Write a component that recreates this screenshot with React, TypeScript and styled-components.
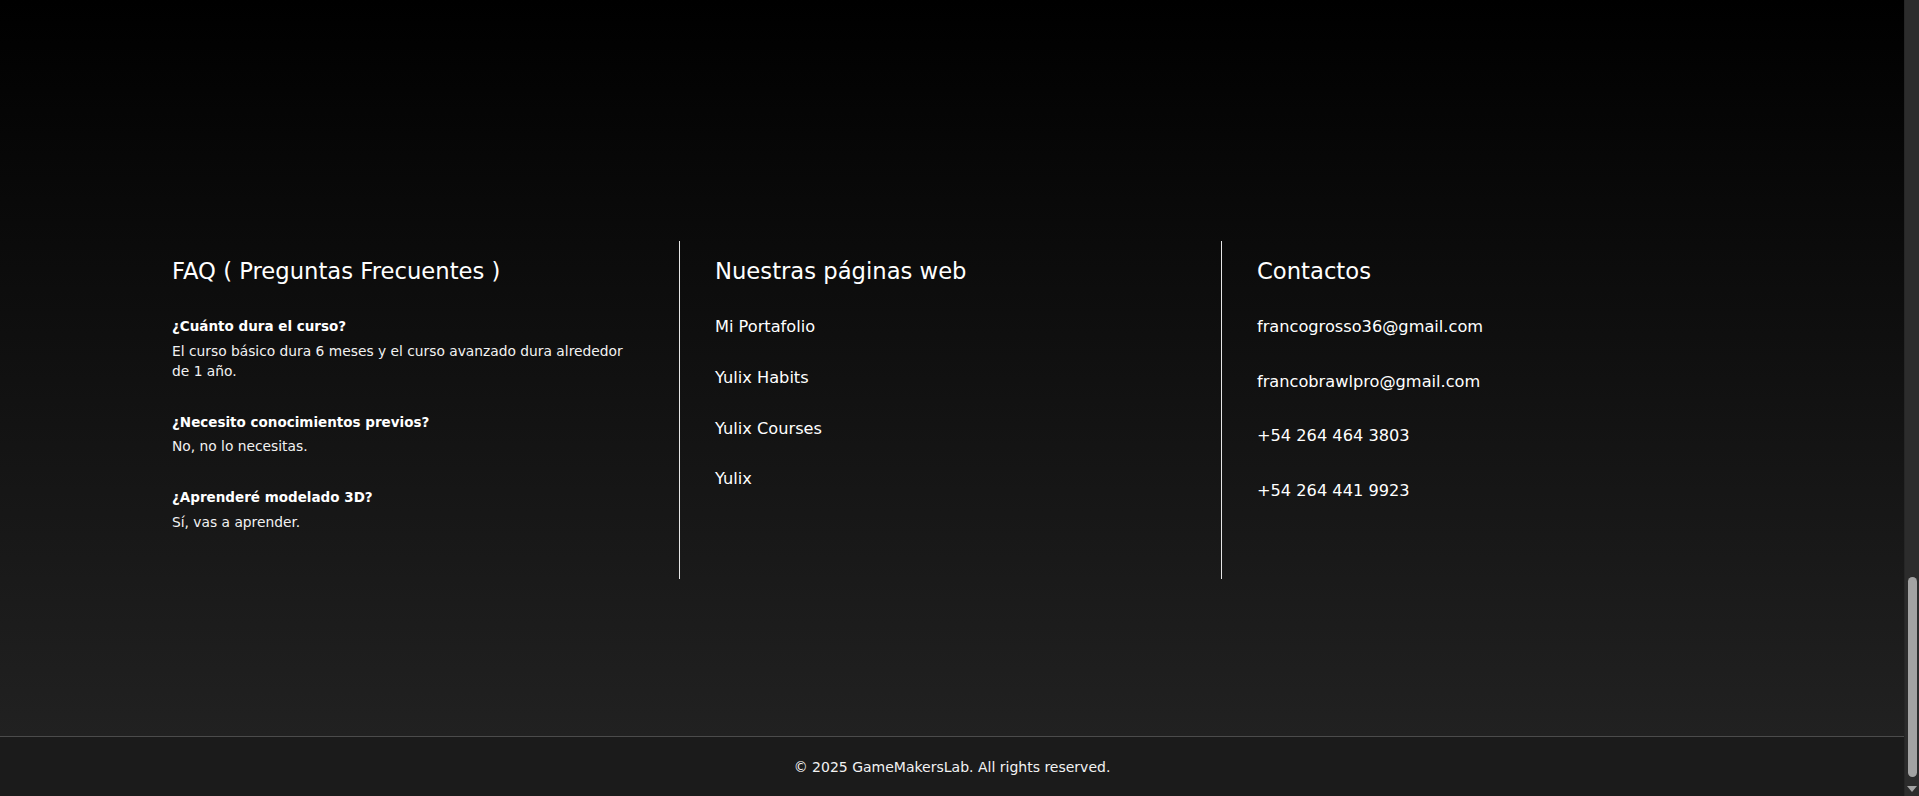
import React from "react";
import styled, { createGlobalStyle } from "styled-components";

const GlobalStyle = createGlobalStyle`
  html, body { margin: 0; padding: 0; background: #000; overflow: hidden; }
  body { font-family: "DejaVu Sans", "Liberation Sans", sans-serif; color: #fff; }
  * { box-sizing: border-box; }
`;

const Page = styled.div`
  display: flex;
  height: 100vh;
`;

const Footer = styled.footer`
  flex: 1;
  display: flex;
  flex-direction: column;
  min-width: 0;
`;

const Main = styled.div`
  height: 736px;
  background: linear-gradient(180deg, #000 0%, #212121 100%);
  padding: 241px 0 0 137px;
`;

const Columns = styled.div`
  display: grid;
  grid-template-columns: repeat(3, 542px);
`;

const Column = styled.div<{ $divided?: boolean }>`
  padding: 17px 35px 0;
  height: 338px;
  border-left: ${(p) => (p.$divided ? "1px solid #e6e6e6" : "none")};
`;

const Heading = styled.h3`
  margin: 0 0 33px;
  font-size: 22.7px;
  line-height: 26px;
  font-weight: 400;
  color: #fff;
`;

const FaqItem = styled.div`
  margin-bottom: 32px;
`;

const Question = styled.h4`
  margin: 0 0 4px;
  font-size: 13.5px;
  line-height: 19.5px;
  font-weight: 700;
  color: #fff;
`;

const Answer = styled.p`
  margin: 0;
  font-size: 13.8px;
  line-height: 20px;
  color: #f2f2f2;
`;

const LinkList = styled.ul<{ $gap: number }>`
  list-style: none;
  margin: -2px 0 0;
  padding: 0;
  display: flex;
  flex-direction: column;
  gap: ${(p) => p.$gap}px;
`;

const LinkItem = styled.li`
  font-size: 16.2px;
  line-height: 24px;
  color: #fff;
`;

const Link = styled.a`
  color: inherit;
  text-decoration: none;
`;

const BottomBar = styled.div`
  height: 60px;
  border-top: 1px solid #4b4b4b;
  background: #1b1b1b;
  display: flex;
  align-items: center;
  justify-content: center;
  font-size: 14px;
  color: #f2f2f2;
`;

const ScrollRail = styled.div`
  width: 15px;
  flex: none;
  background: #2c2c2c;
  border-left: 1px solid #262626;
  display: flex;
  flex-direction: column;
  justify-content: flex-end;
  align-items: center;
`;

const ScrollThumb = styled.div`
  width: 9px;
  height: 200px;
  margin-bottom: 4px;
  border-radius: 5px;
  background: #a3a3a3;
`;

const ScrollArrow = styled.div`
  height: 15px;
  width: 100%;
  display: flex;
  align-items: center;
  justify-content: center;
  &::after {
    content: "";
    border-left: 5px solid transparent;
    border-right: 5px solid transparent;
    border-top: 6px solid #a3a3a3;
  }
`;

const faqs = [
  {
    q: "¿Cuánto dura el curso?",
    a: "El curso básico dura 6 meses y el curso avanzado dura alrededor de 1 año.",
  },
  { q: "¿Necesito conocimientos previos?", a: "No, no lo necesitas." },
  { q: "¿Aprenderé modelado 3D?", a: "Sí, vas a aprender." },
];

const webs = ["Mi Portafolio", "Yulix Habits", "Yulix Courses", "Yulix"];
const contacts = [
  "francogrosso36@gmail.com",
  "francobrawlpro@gmail.com",
  "+54 264 464 3803",
  "+54 264 441 9923",
];

export default function App() {
  return (
    <>
      <GlobalStyle />
      <Page>
        <Footer>
          <Main>
            <Columns>
              <Column>
                <Heading>FAQ ( Preguntas Frecuentes )</Heading>
                {faqs.map((f) => (
                  <FaqItem key={f.q}>
                    <Question>{f.q}</Question>
                    <Answer>{f.a}</Answer>
                  </FaqItem>
                ))}
              </Column>
              <Column $divided>
                <Heading>Nuestras páginas web</Heading>
                <LinkList $gap={26.8}>
                  {webs.map((w) => (
                    <LinkItem key={w}>
                      <Link href="#">{w}</Link>
                    </LinkItem>
                  ))}
                </LinkList>
              </Column>
              <Column $divided>
                <Heading>Contactos</Heading>
                <LinkList $gap={30.7}>
                  {contacts.map((c) => (
                    <LinkItem key={c}>{c}</LinkItem>
                  ))}
                </LinkList>
              </Column>
            </Columns>
          </Main>
          <BottomBar>© 2025 GameMakersLab. All rights reserved.</BottomBar>
        </Footer>
        <ScrollRail>
          <ScrollThumb />
          <ScrollArrow />
        </ScrollRail>
      </Page>
    </>
  );
}
